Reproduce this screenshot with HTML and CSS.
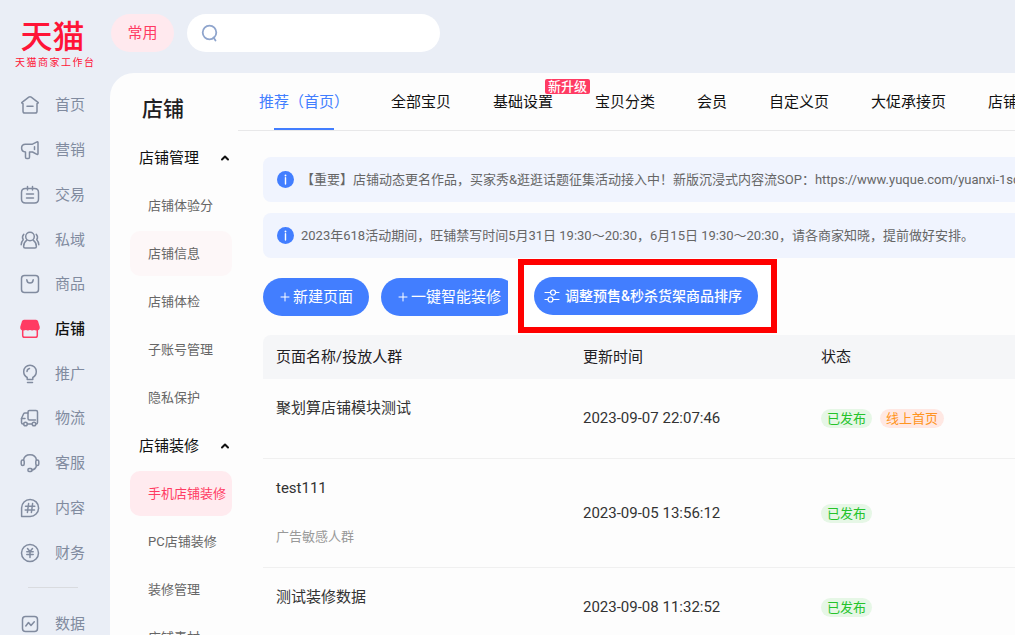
FILE: index.html
```html
<!DOCTYPE html>
<html lang="zh-CN">
<head>
<meta charset="utf-8">
<title>天猫商家工作台</title>
<link rel="stylesheet" href="styles.css">
</head>
<body>
<div class="app">
  <aside class="sidebar">
    <div class="brand">
      <div class="brand-name">天猫</div>
      <div class="brand-sub">天猫商家工作台</div>
    </div>
    <nav class="nav">
      <a class="nav-item" href="#"><svg class="icon" viewBox="0 0 20 20"><path d="M8.800 2.200Q10 1.300 11.200 2.200L18 7.300Q18.600 7.900 18 8.200L17 8.600V16.200Q17 18 15.200 18H4.800Q3 18 3 16.200V8.600L2 8.200Q1.400 7.900 2 7.300Z"/><path d="M7 11.300H13"/></svg>首页</a>
      <a class="nav-item" href="#"><svg class="icon" viewBox="0 0 20 20"><path d="M18 2.500V13.800Q18 14.800 17 14.300L12.500 12H9.500V17.200Q9.500 18.500 8.200 18.500H6.800Q5.500 18.500 5.500 17.200V12Q1.600 11.800 1.600 8Q1.600 4.200 5.500 4.200H12.500L17 1.900Q18 1.500 18 2.500Z"/><path d="M14.500 6.800V9.500"/></svg>营销</a>
      <a class="nav-item" href="#"><svg class="icon" viewBox="0 0 20 20"><path d="M5.500 3.500H14.500Q18.500 3.500 18.500 7.500V14Q18.500 18 14.500 18H5.500Q1.500 18 1.500 14V7.500Q1.500 3.500 5.500 3.500Z"/><path d="M7.500 1.500V5M12.500 1.500V5M6.500 9H13.500M6.500 13H13.500"/></svg>交易</a>
      <a class="nav-item" href="#"><svg class="icon" viewBox="0 0 20 20"><circle cx="10" cy="6.500" r="4.300"/><path d="M6.800 10.200Q3.600 12.500 3.600 16.500Q3.600 18 5.100 18H14.900Q16.400 18 16.400 16.500Q16.400 12.500 13.200 10.200"/><path d="M3.800 4.200Q1.500 6.700 3.200 9.700Q1.200 11.800 1.200 14.800M16.200 4.200Q18.500 6.700 16.800 9.700Q18.800 11.800 18.800 14.800"/></svg>私域</a>
      <a class="nav-item" href="#"><svg class="icon" viewBox="0 0 20 20"><rect x="1.500" y="1.500" width="17" height="17" rx="3"/><path d="M6.800 5.800Q7.200 9 10 9Q12.800 9 13.200 5.800"/></svg>商品</a>
      <a class="nav-item nav-item-active" href="#" aria-current="page"><svg class="icon" viewBox="0 0 20 20"><path class="solid" d="M4 1.500H16Q17 1.500 17.400 2.600L19 8Q19.300 10.800 16.700 10.800Q14.800 10.800 14.200 9.800Q12.200 11.800 10 9.800Q7.800 11.800 5.800 9.800Q5.200 10.800 3.300 10.800Q.7 10.800 1 8L2.600 2.600Q3 1.500 4 1.500Z"/><path d="M2.700 10V16.500Q2.700 18.300 4.500 18.300H15.500Q17.300 18.300 17.300 16.500V10"/></svg>店铺</a>
      <a class="nav-item" href="#"><svg class="icon" viewBox="0 0 20 20"><path d="M7.200 15.500V13.500Q3.700 11.500 3.700 7.500A6.300 6.300 0 0 1 16.300 7.500Q16.300 11.500 12.800 13.500V15.500Z"/><path d="M7.500 18.500H12.500M7 7.500Q7.200 5 9.500 4.500"/></svg>推广</a>
      <a class="nav-item" href="#"><svg class="icon" viewBox="0 0 20 20"><path d="M3.500 16H3Q1.500 16 1.500 14.500V10.500L3.500 6Q4 5 5 5H8V10.500Q8 12 9.500 12H15.500"/><path d="M8 5V4Q8 2.500 9.500 2.500H16Q17.500 2.500 17.500 4V14.500Q17.500 16 16 16M7.500 16H12M1.500 10.500H5"/><circle cx="5.500" cy="16" r="1.800"/><circle cx="14" cy="16" r="1.800"/></svg>物流</a>
      <a class="nav-item" href="#"><svg class="icon" viewBox="0 0 20 20"><path d="M3.500 7Q4.500 1.800 10 1.800Q15.500 1.800 16.500 7M16.500 12.500Q15.500 16.800 11.500 17"/><rect x="1.200" y="7" width="3" height="5.500" rx="1.500"/><rect x="15.800" y="7" width="3" height="5.500" rx="1.500"/><rect x="8" y="15.600" width="4" height="2.800" rx="1"/></svg>客服</a>
      <a class="nav-item" href="#"><svg class="icon" viewBox="0 0 20 20"><path d="M1.600 18.400V10A8.500 8.500 0 1 1 10 18.400Z"/><path d="M8.600 5.500 7.400 14.500M12.600 5.500 11.400 14.500M5.500 8.200H14.800M5.200 12H14.500"/></svg>内容</a>
      <a class="nav-item" href="#"><svg class="icon" viewBox="0 0 20 20"><circle cx="10" cy="10" r="8.500"/><path d="M7.500 5.500 10 8.500 12.500 5.500M10 8.500V14.500M6.800 8.800H13.200M6.800 11.500H13.200"/></svg>财务</a>
    </nav>
    <div class="nav-divider"></div>
    <a class="nav-item" href="#"><svg class="icon" viewBox="0 0 20 20"><rect x="2.500" y="2.500" width="15" height="15" rx="3"/><path d="M5.800 12 8.500 8.500 11 11.500 14.300 7.800"/></svg>数据</a>
  </aside>

  <div class="workspace">
    <header class="topbar">
      <button class="favorite" type="button">常用</button>
      <label class="search">
        <svg class="search-icon" viewBox="0 0 18 18"><circle cx="8.500" cy="8.500" r="6.800"/><path d="M12.500 13.500 14.500 16.500"/></svg>
        <input class="search-input" type="search" aria-label="搜索">
      </label>
    </header>

    <div class="panel">
      <nav class="menu">
        <h1 class="menu-title">店铺</h1>
        <button class="menu-group" type="button">店铺管理<svg class="caret" viewBox="0 0 10 10"><path d="M2 6.500 5 3.500 8 6.500"/></svg></button>
        <a class="menu-item" href="#">店铺体验分</a>
        <a class="menu-item menu-item-hover" href="#">店铺信息</a>
        <a class="menu-item" href="#">店铺体检</a>
        <a class="menu-item" href="#">子账号管理</a>
        <a class="menu-item" href="#">隐私保护</a>
        <button class="menu-group" type="button">店铺装修<svg class="caret" viewBox="0 0 10 10"><path d="M2 6.500 5 3.500 8 6.500"/></svg></button>
        <a class="menu-item menu-item-active" href="#">手机店铺装修</a>
        <a class="menu-item" href="#">PC店铺装修</a>
        <a class="menu-item" href="#">装修管理</a>
        <a class="menu-item" href="#">店铺素材</a>
      </nav>

      <main class="content">
        <nav class="tabs">
          <a class="tab tab-active" href="#">推荐（首页）</a>
          <a class="tab" href="#">全部宝贝</a>
          <a class="tab" href="#">基础设置<span class="tab-badge">新升级</span></a>
          <a class="tab" href="#">宝贝分类</a>
          <a class="tab" href="#">会员</a>
          <a class="tab" href="#">自定义页</a>
          <a class="tab" href="#">大促承接页</a>
          <a class="tab" href="#">店铺</a>
        </nav>

        <div class="body">
          <div class="notice"><svg class="info" viewBox="0 0 18 18"><circle cx="9" cy="9" r="9"/><circle class="info-dot" cx="9" cy="4.800" r="1"/><path d="M9 7.200V13.800"/></svg><span>【重要】店铺动态更名作品，买家秀&amp;逛逛话题征集活动接入中！新版沉浸式内容流SOP：https://www.yuque.com/yuanxi-1squi/</span></div>
          <div class="notice"><svg class="info" viewBox="0 0 18 18"><circle cx="9" cy="9" r="9"/><circle class="info-dot" cx="9" cy="4.800" r="1"/><path d="M9 7.200V13.800"/></svg><span>2023年618活动期间，旺铺禁写时间5月31日 19:30～20:30，6月15日 19:30～20:30，请各商家知晓，提前做好安排。</span></div>

          <div class="actions">
            <button class="btn" type="button"><svg class="plus" viewBox="0 0 10 10"><path d="M5 1V9M1 5H9"/></svg>新建页面</button>
            <div class="btn-clip"><button class="btn" type="button"><svg class="plus" viewBox="0 0 10 10"><path d="M5 1V9M1 5H9"/></svg>一键智能装修</button></div>
            <div class="callout"><button class="btn btn-sort" type="button"><svg class="sliders" viewBox="0 0 16 16"><path d="M1 4.500H6.500M11.500 4.500H15M1 11.500H4M9 11.500H15"/><circle cx="9" cy="4.500" r="2.500"/><circle cx="6.500" cy="11.500" r="2.500"/></svg>调整预售&amp;秒杀货架商品排序</button></div>
          </div>

          <table class="pages">
            <colgroup><col class="col-name"><col class="col-time"><col></colgroup>
            <thead><tr><th scope="col">页面名称/投放人群</th><th scope="col">更新时间</th><th scope="col">状态</th></tr></thead>
            <tbody>
              <tr>
                <td class="name">聚划算店铺模块测试</td>
                <td>2023-09-07 22:07:46</td>
                <td><span class="tag tag-live">已发布</span><span class="tag tag-home">线上首页</span></td>
              </tr>
              <tr>
                <td class="name">test111<div class="audience">广告敏感人群</div></td>
                <td>2023-09-05 13:56:12</td>
                <td><span class="tag tag-live">已发布</span></td>
              </tr>
              <tr>
                <td class="name">测试装修数据</td>
                <td>2023-09-08 11:32:52</td>
                <td><span class="tag tag-live">已发布</span></td>
              </tr>
            </tbody>
          </table>
        </div>
      </main>
    </div>
  </div>
</div>
</body>
</html>
```

FILE: styles.css
```css
* { box-sizing: border-box; }

body {
  margin: 0;
  background: #eaeef6;
  color: #1f2023;
  font: 15px/22px Roboto, "Noto Sans CJK SC", sans-serif;
}

a { color: inherit; text-decoration: none; }

button {
  padding: 0;
  border: 0;
  background: none;
  color: inherit;
  font: inherit;
  white-space: nowrap;
  cursor: pointer;
}

svg {
  flex: none;
  fill: none;
  stroke: currentColor;
  stroke-linecap: round;
  stroke-linejoin: round;
}

.app { display: flex; height: 100vh; overflow: hidden; }

/* Sidebar */
.sidebar { flex: none; width: 110px; padding-top: 20px; }

.brand { width: 79px; margin-left: 15px; color: #ff1437; }

.brand-name {
  padding-right: 4px;
  font-size: 32px;
  font-weight: 500;
  line-height: 34px;
  text-align: center;
}

.brand-sub {
  font-size: 10px;
  line-height: 18px;
  text-align-last: justify;
}

.nav {
  display: grid;
  grid-auto-rows: 1fr;
  height: 492px;
  margin-top: 11px;
}

.nav-item {
  display: flex;
  align-items: center;
  gap: 15px;
  min-height: 44px;
  padding-left: 20px;
  color: #818b9f;
}

.nav-item-active { color: #111; font-weight: 500; }
.nav-item-active .icon { color: #ff3b63; }
.icon { width: 20px; height: 20px; stroke-width: 1.5; }
.icon .solid { fill: currentColor; }
.nav-divider { height: 1px; margin: 12px 32px 14px 28px; background: #d9dbdf; }

/* Workspace */
.workspace {
  display: flex;
  flex: 1;
  flex-direction: column;
  min-width: 0;
}

.topbar { display: flex; gap: 13px; padding: 14px 0 21px 1px; }

.favorite {
  width: 63px;
  height: 38px;
  border-radius: 19px;
  background: #ffe9ee;
  color: #ff3b63;
}

.search {
  display: flex;
  align-items: center;
  width: 253px;
  height: 38px;
  padding: 0 14px;
  border-radius: 19px;
  background: #fff;
}

.search-icon { width: 18px; height: 18px; color: #8fa5cd; stroke-width: 1.8; }

.search-input {
  flex: 1;
  min-width: 0;
  border: 0;
  outline: 0;
  background: none;
  font: inherit;
}

.panel {
  display: flex;
  flex: 1;
  min-height: 0;
  overflow: hidden;
  border-top-left-radius: 24px;
  background: #fdfdfd;
}

/* Shop menu */
.menu {
  display: flex;
  flex: none;
  flex-direction: column;
  gap: 3px;
  width: 128px;
  padding: 20px 6px 0 20px;
}

.menu-title {
  margin: 0 0 7px 12px;
  font-size: 21px;
  font-weight: 500;
  line-height: 32px;
}

.menu-group {
  display: flex;
  flex: none;
  align-items: center;
  justify-content: space-between;
  height: 45px;
  padding: 0 2px 0 9px;
  color: #111;
}

.caret { width: 10px; height: 10px; stroke-width: 2; }

.menu-item {
  flex: none;
  padding-left: 18px;
  border-radius: 10px;
  color: #666;
  font-size: 13px;
  line-height: 45px;
  white-space: nowrap;
}

.menu-item-hover { background: #fdf7f8; }
.menu-item-active { background: #ffebef; color: #ff3b63; }

/* Content */
.content { flex: 1; min-width: 0; overflow: hidden; }

.tabs {
  display: flex;
  gap: 42px;
  height: 58px;
  padding-left: 21px;
  border-bottom: 1px solid #e8e8e9;
}

.tab {
  position: relative;
  flex: none;
  color: #111;
  line-height: 58px;
  white-space: nowrap;
}

.tab-active { color: #427eff; }

.tab-active::after {
  position: absolute;
  right: 15px;
  bottom: 0;
  left: 15px;
  height: 2px;
  background: #427eff;
  content: "";
}

.tab-badge {
  position: absolute;
  top: 6px;
  right: -37px;
  padding: 0 3px;
  border-radius: 2px;
  background: #ff3b63;
  color: #fff;
  font-size: 13px;
  font-weight: 500;
  line-height: 15px;
}

.body { padding: 26px 0 0 25px; }

.notice {
  display: flex;
  align-items: center;
  gap: 7px;
  height: 45px;
  margin-bottom: 11px;
  padding-left: 14px;
  border-radius: 8px 0 0 8px;
  background: #f0f4fe;
  color: #666;
  font-size: 13px;
  white-space: nowrap;
}

.info { width: 17px; height: 17px; color: #fff; stroke-width: 1.5; }
.info circle { fill: #427eff; stroke: none; }
.info .info-dot { fill: #fff; }

.actions { display: flex; align-items: center; height: 56px; margin-bottom: 10px; }

.btn {
  display: flex;
  align-items: center;
  gap: 3px;
  height: 38px;
  padding: 0 16px 0 17px;
  border-radius: 19px;
  background: #427eff;
  color: #fff;
}

.plus { width: 10px; height: 10px; stroke-width: 1; }
.btn-clip { width: 127px; margin-left: 12px; overflow: hidden; }

/* Highlight frame around the sort button */
.callout {
  margin: -11px 0 -9px 10px;
  padding: 12px 13px 12px 10px;
  border: 6px solid #f00;
  background: #fff;
}

.btn-sort { gap: 5px; padding: 0 16px 0 10px; font-size: 14px; font-weight: 500; }
.sliders { width: 16px; height: 16px; stroke-width: 1.2; }

.pages { width: 100%; border-collapse: collapse; table-layout: fixed; }
.col-name { width: 307px; }
.col-time { width: 238px; }

.pages th {
  height: 44px;
  padding: 0 13px;
  background: #f5f6f8;
  font-weight: 400;
  text-align: left;
}

.pages th:first-child { border-top-left-radius: 8px; }

.pages td {
  height: 79px;
  padding: 0 13px;
  border-bottom: 1px solid #f0f0f0;
  color: #333;
}

.pages .name { padding: 18px 13px; vertical-align: top; }

.audience {
  margin: 28px 0 2px;
  color: #999;
  font-size: 13px;
  line-height: 20px;
}

.tag {
  display: inline-block;
  margin-right: 8px;
  padding: 0 6px;
  border-radius: 10px;
  font-size: 13px;
  line-height: 19px;
}

.tag-live { background: #e6f7e6; color: #25c32b; }
.tag-home { background: #ffe8e3; color: #ff9420; }
```
